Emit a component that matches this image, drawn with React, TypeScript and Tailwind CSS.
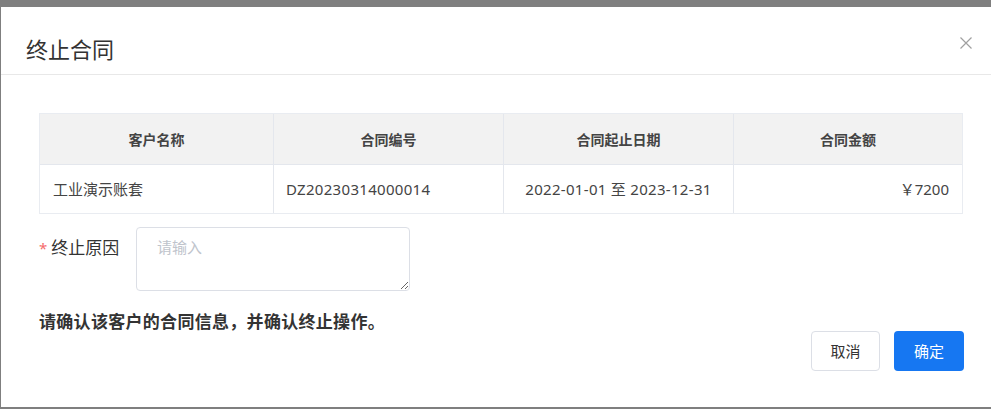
const font = 'font-["Noto_Sans","Noto_Sans_CJK_SC",sans-serif]';

const columns = ['客户名称', '合同编号', '合同起止日期', '合同金额'];

const row = {
  customer: '工业演示账套',
  code: 'DZ20230314000014',
  period: '2022-01-01 至 2023-12-31',
  amount: '￥7200',
};

const CloseIcon = () => (
  <svg width="12" height="12" viewBox="0 0 12 12" fill="none" stroke="currentColor" strokeWidth="1.2">
    <path d="M0.5 0.5L11.5 11.5M11.5 0.5L0.5 11.5" />
  </svg>
);

const TerminateContractDialog = () => {
  return (
    <div className="flex h-[400px] flex-col bg-white">
      <div className="flex items-start justify-between border-b border-[#e8e8e8] pb-[11px] pl-[25px] pr-[19px] pt-[26px]">
        <h2 className='font-["Noto_Sans_CJK_SC",sans-serif] text-[22px] leading-[30px] text-[#333]'>终止合同</h2>
        <button className="mt-[4px] text-[#a0a0a0]">
          <CloseIcon />
        </button>
      </div>

      <div className="pl-[38px] pr-[28px] pt-[38px]">
        <div className="border border-[#e9ecf1] text-[14px]">
          <div className="grid grid-cols-[234px_230px_230px_1fr] bg-[#f2f2f2] font-bold text-[#444]">
            {columns.map((col, i) => (
              <div
                key={col}
                className={`flex h-[50px] items-center justify-center ${i < 3 ? 'border-r border-[#e4e7ed]' : ''}`}
              >
                {col}
              </div>
            ))}
          </div>
          <div className="grid grid-cols-[234px_230px_230px_1fr] border-t border-[#e4e7ed] text-[15px] text-[#444]">
            <div className="flex h-[48px] items-center border-r border-[#e4e7ed] px-[13px]">{row.customer}</div>
            <div className="flex h-[48px] items-center border-r border-[#e4e7ed] px-[12px] tracking-[0.3px]">{row.code}</div>
            <div className="flex h-[48px] items-center justify-center border-r border-[#e4e7ed] tracking-[0.3px]">{row.period}</div>
            <div className="flex h-[48px] items-center justify-end px-[13px]">{row.amount}</div>
          </div>
        </div>

        <div className="mt-[13px] flex items-start">
          <label className="flex w-[97px] items-center pt-[9px] text-[17px] leading-[24px] text-[#333]">
            <span className="mr-[4px] text-[15px] text-[#f56c6c]">*</span>
            终止原因
          </label>
          <textarea
            placeholder="请输入"
            className="h-[64px] w-[274px] rounded-[4px] border border-[#dcdfe6] px-[20px] py-[8px] text-[15px] leading-[22px] text-[#333] placeholder:text-[#c0c4cc] focus:outline-none"
          />
        </div>

        <div className="flex items-start justify-between">
          <p className="mt-[19px] text-[17px] font-bold leading-[24px] tracking-[0.3px] text-[#333]">
            请确认该客户的合同信息，并确认终止操作。
          </p>
          <div className="-mr-px mt-[40px] flex gap-[14px]">
            <button className="h-[40px] w-[69px] rounded-[4px] border border-[#dcdfe6] bg-white text-[15px] text-[#333]">
              取消
            </button>
            <button className="h-[40px] w-[70px] rounded-[4px] bg-[#1677f2] text-[15px] text-white">
              确定
            </button>
          </div>
        </div>
      </div>
    </div>
  );
};

const App = () => {
  return (
    <div className={`h-[409px] w-[991px] overflow-hidden bg-[#7f7f7f] pl-px pt-[7px] ${font}`}>
      <TerminateContractDialog />
    </div>
  );
};

export default App;
